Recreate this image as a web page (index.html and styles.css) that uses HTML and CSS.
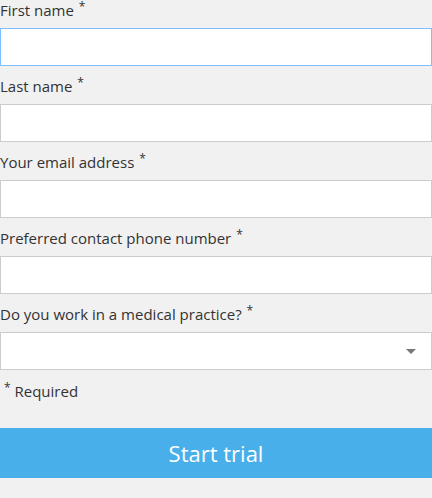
FILE: index.html
```html
<!DOCTYPE html>
<html>
<head>
<meta charset="utf-8">
<link rel="stylesheet" href="styles.css">
</head>
<body>
<form class="form">
  <div class="field">
    <label class="label">First name <sup class="req">*</sup></label>
    <div class="input focused"></div>
  </div>
  <div class="field">
    <label class="label">Last name <sup class="req">*</sup></label>
    <div class="input"></div>
  </div>
  <div class="field">
    <label class="label">Your email address <sup class="req">*</sup></label>
    <div class="input"></div>
  </div>
  <div class="field">
    <label class="label">Preferred contact phone number <sup class="req">*</sup></label>
    <div class="input"></div>
  </div>
  <div class="field">
    <label class="label">Do you work in a medical practice? <sup class="req">*</sup></label>
    <div class="input select"><span class="caret"></span></div>
  </div>
  <p class="required"><sup class="req">*</sup> Required</p>
  <button type="button" class="submit">Start trial</button>
</form>
</body>
</html>
```
FILE: styles.css
```css
html, body {
  margin: 0;
  padding: 0;
  background: #f1f1f1;
}
body {
  font-family: "Open Sans", "Liberation Sans", sans-serif;
  font-size: 15px;
  color: #333;
}
.form {
  display: flex;
  flex-direction: column;
}
.field {
  display: flex;
  flex-direction: column;
  margin-bottom: 10px;
}
.label {
  display: block;
  line-height: 21px;
  height: 20px;
  margin-bottom: 8px;
}
.req {
  font-size: 12px;
  line-height: 0;
  vertical-align: 5px;
  margin-left: 1px;
}
.input {
  box-sizing: border-box;
  height: 38px;
  background: #fff;
  border: 1px solid #cccccc;
}
.input.focused {
  border-color: #80bdff;
}
.select {
  display: flex;
  align-items: center;
  justify-content: flex-end;
  padding-right: 15px;
}
.caret {
  width: 0;
  height: 0;
  border-left: 5px solid transparent;
  border-right: 5px solid transparent;
  border-top: 5px solid #777;
}
.required {
  margin: 0;
  line-height: 22px;
  padding-left: 4px;
}
.required .req {
  margin-left: 0;
}
.submit {
  margin-top: 26px;
  height: 50px;
  border: 0;
  background: #48afea;
  color: #fff;
  font-family: "Open Sans", "Liberation Sans", sans-serif;
  font-size: 22px;
  padding: 0;
  width: 100%;
}
```
